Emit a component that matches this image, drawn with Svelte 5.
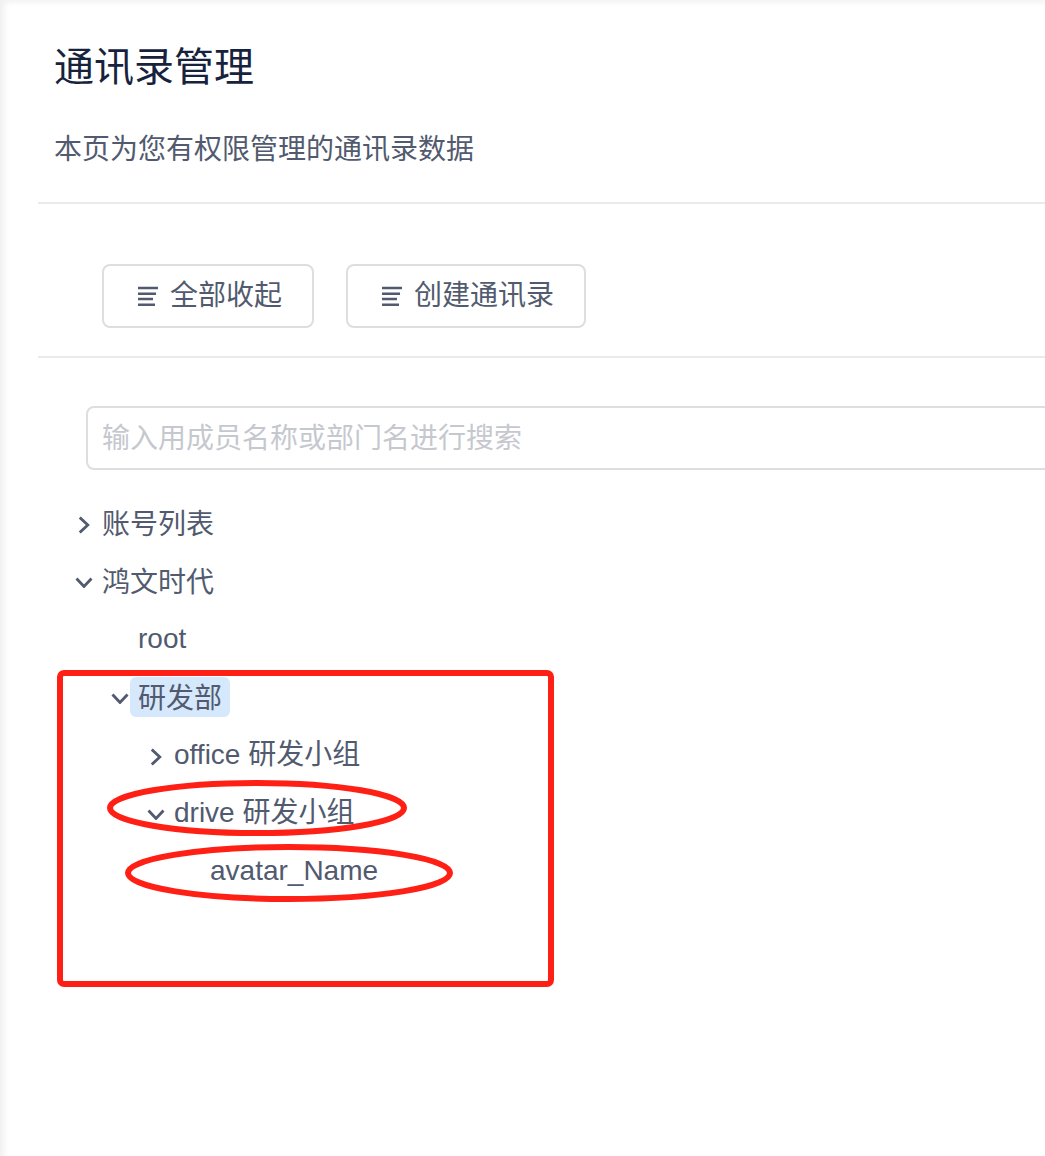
<script>
  const tree = [
    { label: '账号列表', level: 0, arrow: 'right', cjk: true },
    { label: '鸿文时代', level: 0, arrow: 'down', cjk: true },
    { label: 'root', level: 1 },
    { label: '研发部', level: 1, arrow: 'down', selected: true, cjk: true },
    { label: 'office 研发小组', level: 2, arrow: 'right' },
    { label: 'drive 研发小组', level: 2, arrow: 'down' },
    { label: 'avatar_Name', level: 3 }
  ];
</script>

<div class="page">
  <main>
    <header>
      <h1>通讯录管理</h1>
      <p class="cjk">本页为您有权限管理的通讯录数据</p>
    </header>

    <div class="toolbar">
      <button>
        <svg width="20" height="20" viewBox="0 0 20 20"><path d="M0 2h20M0 7.7h18M0 13h15M0 18.7h17" /></svg>
        全部收起
      </button>
      <button>
        <svg width="20" height="20" viewBox="0 0 20 20"><path d="M0 2h20M0 7.7h18M0 13h15M0 18.7h17" /></svg>
        创建通讯录
      </button>
    </div>

    <div class="search">
      <input placeholder="输入用成员名称或部门名进行搜索" />
    </div>

    <ul class="tree">
      {#each tree as node}
        <li style="padding-left: {node.level * 36}px">
          <span class="arrow">
            {#if node.arrow === 'right'}
              <svg width="11" height="18" viewBox="0 0 11 18"><path d="M.8 1.5l8 7.5-8 7.5" /></svg>
            {:else if node.arrow === 'down'}
              <svg width="18" height="11" viewBox="0 0 18 11"><path d="M1.5 1.5l7.5 8 7.5-8" /></svg>
            {/if}
          </span>
          <span class="title" class:selected={node.selected} class:cjk={node.cjk}>{node.label}</span>
        </li>
      {/each}
    </ul>
  </main>

  <svg class="marks" width="1045" height="1156" viewBox="0 0 1045 1156">
    <rect x="60" y="673" width="491" height="311" rx="4" />
    <ellipse cx="257" cy="808" rx="147" ry="25" />
    <ellipse cx="289" cy="873" rx="161" ry="26" />
  </svg>
</div>

<style>
  :global(body) {
    margin: 0;
    background: #fff;
  }

  .page {
    position: relative;
    width: 1045px;
    height: 1156px;
    overflow: hidden;
    font-family: "Liberation Sans", "Noto Sans CJK SC", sans-serif;
    font-size: 28px;
    color: #515a6e;
    box-shadow: inset 6px 4px 6px -2px #f0f0f0;
  }

  .cjk {
    font-family: "Noto Sans CJK SC", sans-serif;
  }

  main {
    margin-left: 38px;
    width: 1100px;
  }

  header {
    height: 202px;
    padding-left: 16px;
    border-bottom: 2px solid #e8eaec;
  }

  h1 {
    margin: 0;
    padding-top: 40px;
    font-size: 40px;
    font-weight: 400;
    line-height: 54px;
    color: #17233d;
  }

  header p {
    margin: 0;
    padding-top: 31px;
    line-height: 44px;
  }

  .toolbar {
    display: flex;
    gap: 32px;
    height: 154px;
    padding: 60px 0 0 64px;
    box-sizing: border-box;
    border-bottom: 2px solid #e8eaec;
  }

  button {
    display: flex;
    align-items: center;
    justify-content: center;
    gap: 12px;
    height: 64px;
    padding: 0 30px 0 34px;
    font: inherit;
    line-height: 40px;
    color: inherit;
    background: #fff;
    border: 2px solid #dcdee2;
    border-radius: 8px;
  }

  button svg path {
    fill: none;
    stroke: #515a6e;
    stroke-width: 2.5;
  }

  .search {
    padding: 48px 0 0 48px;
  }

  input {
    display: block;
    width: 100%;
    height: 64px;
    box-sizing: border-box;
    padding: 2px 14px 0;
    font: inherit;
    color: inherit;
    border: 2px solid #dcdee2;
    border-radius: 8px;
    outline: none;
  }

  input::placeholder {
    color: #c5c8ce;
    opacity: 1;
  }

  .tree {
    list-style: none;
    margin: 24px 0 0 36px;
    padding: 0;
  }

  li {
    display: flex;
    align-items: center;
    height: 58px;
  }

  .arrow {
    display: flex;
    justify-content: center;
    align-items: center;
    width: 20px;
    height: 40px;
    padding-top: 3px;
    box-sizing: border-box;
  }

  .arrow path {
    fill: none;
    stroke: #515a6e;
    stroke-width: 2.8;
  }

  .title {
    height: 40px;
    line-height: 40px;
    padding: 0 8px;
    border-radius: 6px;
  }

  .title.cjk {
    line-height: 38px;
  }

  .selected {
    background: #d5e8fc;
  }

  .marks {
    position: absolute;
    top: 0;
    left: 0;
    pointer-events: none;
  }

  .marks rect,
  .marks ellipse {
    fill: none;
    stroke: #ff2015;
    stroke-width: 6;
  }
</style>
